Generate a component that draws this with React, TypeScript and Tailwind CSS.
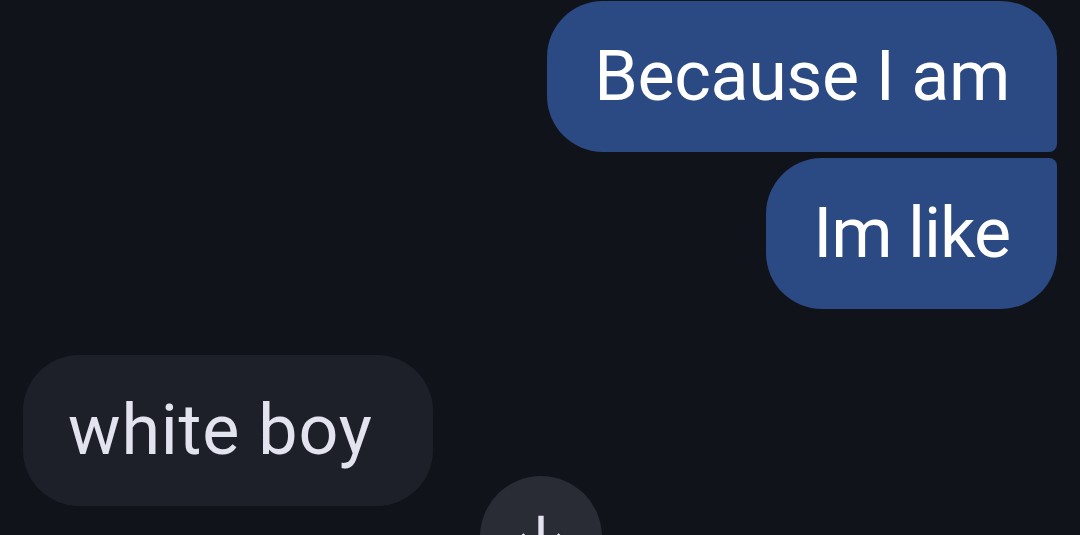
import React from 'react';

const Sent = ({ text, shape, extra = '' }: { text: string; shape: string; extra?: string }) => (
  <div className={`self-end h-[151px] flex items-center pl-[47px] pr-[47px] bg-[#2b4982] text-white text-[70px] leading-none ${shape}`}>
    <span className={`-mt-[2px] ${extra}`}>{text}</span>
  </div>
);

export default function App() {
  return (
    <div className="relative h-[535px] w-[1080px] overflow-hidden bg-[#11131b] font-['Roboto',sans-serif]">
      <div className="flex flex-col px-[23px] pt-[1px]">
        <Sent text="Because I am" shape="rounded-tl-[56px] rounded-tr-[56px] rounded-bl-[56px] rounded-br-[8px]" extra="tracking-[-0.4px]" />
        <div className="mt-[6px] flex justify-end">
          <Sent text="Im like" shape="rounded-tl-[56px] rounded-tr-[8px] rounded-bl-[56px] rounded-br-[56px]" extra="tracking-[-1px]" />
        </div>
        <div className="mt-[46px] self-start h-[151px] flex items-center pl-[45px] pr-[60px] rounded-[56px] bg-[#1e2029] text-[#e2e3ee] text-[70px] leading-none">
          <span className="-mt-[2px] tracking-[0.8px]">white boy</span>
        </div>
      </div>

      {/* scroll to bottom */}
      <button className="absolute left-[480px] top-[476px] w-[122px] h-[122px] rounded-full bg-[#2a2c35] flex items-center justify-center">
        <svg width="64" height="64" viewBox="0 0 24 24" fill="#e2e3ee">
          <path d="M20 12l-1.41-1.41L13 16.17V4h-2v12.17l-5.58-5.59L4 12l8 8 8-8z" />
        </svg>
      </button>
    </div>
  );
}
